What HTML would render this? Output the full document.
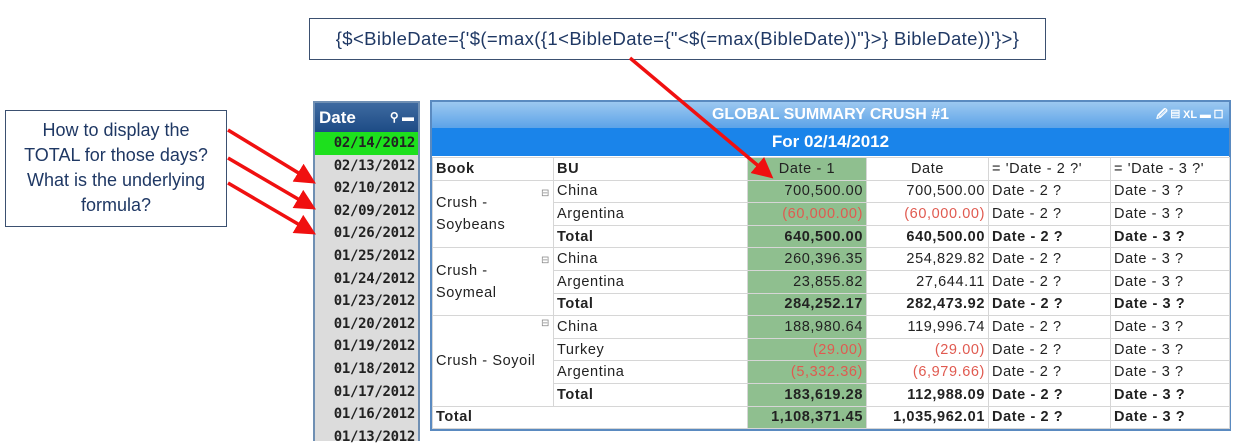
<!DOCTYPE html><html><head><style>
body{margin:0;width:1239px;height:438px;background:#fff;position:relative;overflow:hidden;font-family:"Liberation Sans",sans-serif}
.abs{position:absolute}
#f{left:309px;top:18px;width:735px;height:40px;border:1px solid #3b5070;font-size:18.5px;color:#1f3864;text-align:center;line-height:40px;letter-spacing:.4px}
#c{left:5px;top:110px;width:222px;height:117px;border:1px solid #3b5070;color:#1f3864;font-size:18px;text-align:center;line-height:25px;box-sizing:border-box;padding-top:7px}
#dl{left:313px;top:101px;width:107px;height:340px;border:2px solid #6f8fb3;border-bottom:none;background:#dcdcdc;box-sizing:border-box}
#dl .h{height:29px;background:linear-gradient(#3e6aa0,#1d4b85);color:#fff;font-weight:bold;font-size:17px;line-height:29px;padding-left:4px}
#dl .r{height:22.6px;line-height:22.6px;text-align:right;padding-right:3px;font-family:"DejaVu Sans Mono",monospace;font-weight:bold;font-size:14px;color:#222;letter-spacing:-.3px}
#ch{left:430px;top:100px;width:801px;height:331px;border:2px solid #5a8ac0;box-sizing:border-box;background:#fff}
#t1{left:432px;top:102px;width:797px;height:26px;background:linear-gradient(#9cc8f0,#5ca3e8);color:#fff;font-weight:bold;font-size:16px;text-align:center;line-height:26px}
#t2{left:432px;top:128px;width:797px;height:28px;background:#1a84ea;color:#fff;font-weight:bold;font-size:17px;text-align:center;line-height:28px}
table{position:absolute;left:432px;top:157px;border-collapse:collapse;font-size:14.5px;color:#222;letter-spacing:.6px;table-layout:fixed}
td{border:1px solid #d6d6d6;height:21.6px;padding:0 3px;white-space:nowrap;overflow:hidden}
.g{background:#8fbf8f;text-align:right}.n{text-align:right}.red{color:#e05a50}.b{font-weight:bold}
</style></head><body>
<div id="f" class="abs">{$&lt;BibleDate={'$(=max({1&lt;BibleDate={"&lt;$(=max(BibleDate))"}&gt;} BibleDate))'}&gt;}</div>
<div id="c" class="abs">How to display the<br>TOTAL for those days?<br>What is the underlying<br>formula?</div>
<div id="dl" class="abs"><div class="h">Date <span style="float:right;padding-right:4px;font-size:12px">⚲ ▬</span></div>
<div class="r" style="background:#1de01d">02/14/2012</div>
<div class="r">02/13/2012</div><div class="r">02/10/2012</div><div class="r">02/09/2012</div><div class="r">01/26/2012</div><div class="r">01/25/2012</div><div class="r">01/24/2012</div><div class="r">01/23/2012</div><div class="r">01/20/2012</div><div class="r">01/19/2012</div><div class="r">01/18/2012</div><div class="r">01/17/2012</div><div class="r">01/16/2012</div><div class="r">01/13/2012</div></div>
<div id="ch" class="abs"></div>
<div id="t1" class="abs">GLOBAL SUMMARY CRUSH #1<span style="position:absolute;right:6px;font-size:11px">🖉 ▤ XL ▬ ☐</span></div>
<div id="t2" class="abs">For 02/14/2012</div>
<table>
<colgroup><col style="width:121px"><col style="width:194px"><col style="width:119px"><col style="width:122px"><col style="width:122px"><col style="width:119px"></colgroup>
<tr><td class="b">Book</td><td class="b">BU</td><td class="g" style="text-align:center">Date - 1</td><td style="text-align:center">Date</td><td>= 'Date - 2 ?'</td><td>= 'Date - 3 ?'</td></tr>
<tr><td rowspan="3" style="vertical-align:middle;line-height:22px;position:relative">Crush -<br>Soybeans<span style="position:absolute;right:3px;top:2px;font-size:10px;color:#888">⊟</span></td><td>China</td><td class="g">700,500.00</td><td class="n">700,500.00</td><td>Date - 2 ?</td><td>Date - 3 ?</td></tr>
<tr><td>Argentina</td><td class="g red">(60,000.00)</td><td class="n red">(60,000.00)</td><td>Date - 2 ?</td><td>Date - 3 ?</td></tr>
<tr class="b"><td>Total</td><td class="g">640,500.00</td><td class="n">640,500.00</td><td>Date - 2 ?</td><td>Date - 3 ?</td></tr>
<tr><td rowspan="3" style="line-height:22px;position:relative">Crush -<br>Soymeal<span style="position:absolute;right:3px;top:2px;font-size:10px;color:#888">⊟</span></td><td>China</td><td class="g">260,396.35</td><td class="n">254,829.82</td><td>Date - 2 ?</td><td>Date - 3 ?</td></tr>
<tr><td>Argentina</td><td class="g">23,855.82</td><td class="n">27,644.11</td><td>Date - 2 ?</td><td>Date - 3 ?</td></tr>
<tr class="b"><td>Total</td><td class="g">284,252.17</td><td class="n">282,473.92</td><td>Date - 2 ?</td><td>Date - 3 ?</td></tr>
<tr><td rowspan="4" style="position:relative">Crush - Soyoil<span style="position:absolute;right:3px;top:2px;font-size:10px;color:#888">⊟</span></td><td>China</td><td class="g">188,980.64</td><td class="n">119,996.74</td><td>Date - 2 ?</td><td>Date - 3 ?</td></tr>
<tr><td>Turkey</td><td class="g red">(29.00)</td><td class="n red">(29.00)</td><td>Date - 2 ?</td><td>Date - 3 ?</td></tr>
<tr><td>Argentina</td><td class="g red">(5,332.36)</td><td class="n red">(6,979.66)</td><td>Date - 2 ?</td><td>Date - 3 ?</td></tr>
<tr class="b"><td>Total</td><td class="g">183,619.28</td><td class="n">112,988.09</td><td>Date - 2 ?</td><td>Date - 3 ?</td></tr>
<tr class="b"><td colspan="2">Total</td><td class="g">1,108,371.45</td><td class="n">1,035,962.01</td><td>Date - 2 ?</td><td>Date - 3 ?</td></tr>
</table>
<svg class="abs" style="left:0;top:0" width="1239" height="438"><defs><marker id="a" markerWidth="6" markerHeight="6" refX="4" refY="3" orient="auto"><path d="M0,0 L6,3 L0,6 Z" fill="#f01010"/></marker></defs>
<g stroke="#f01010" stroke-width="3.5" fill="none" marker-end="url(#a)">
<line x1="228" y1="130" x2="310" y2="180"/><line x1="228" y1="158" x2="310" y2="206"/><line x1="228" y1="183" x2="310" y2="231"/><line x1="630" y1="58" x2="768" y2="174"/></g></svg>
</body></html>
